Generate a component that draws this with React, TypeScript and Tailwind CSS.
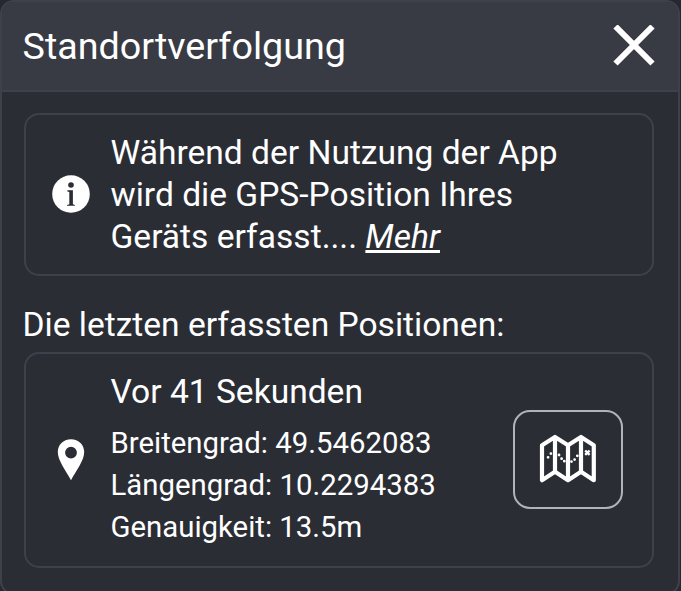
import type { ReactNode } from "react";

function Card({ className, children }: { className: string; children: ReactNode }) {
  return (
    <section className={`flex w-[630px] items-center rounded-[15px] border-2 border-[#3e404b] ${className}`}>
      {children}
    </section>
  );
}

function CloseIcon() {
  return (
    <svg width="42" height="42" viewBox="0 0 42 42" stroke="#fff" strokeWidth="6">
      <path d="M2.500 1.500 39.500 38.500M39.500 1.500 2.500 38.500" />
    </svg>
  );
}

function InfoIcon() {
  return (
    <svg width="38" height="38" viewBox="0 0 38 38">
      <circle cx="19" cy="19" r="18.8" fill="#fff" />
      <circle cx="19" cy="10" r="2.8" fill="#2b2d35" />
      <path d="M15.400 15.300h5.500v14l2 .6v.9h-7.900v-.9l2.300-.6V17l-1.900-.6z" fill="#2b2d35" />
    </svg>
  );
}

function PinIcon() {
  return (
    <svg width="28" height="42" viewBox="0 0 28 42">
      <path
        fill="#fff"
        fillRule="evenodd"
        d="M14 .2C6.200 .2.8 5.800.8 13c0 8.500 8 18.500 13.200 28.300C19.200 31.500 27.200 21.500 27.200 13 27.200 5.800 21.800.2 14 .2ZM14 7.700a5.900 5.900 0 1 0 0 11.800 5.900 5.900 0 0 0 0-11.800Z"
      />
    </svg>
  );
}

function MapIcon() {
  return (
    <svg width="58" height="50" viewBox="0 0 58 50" fill="none" stroke="#fff">
      <path
        strokeWidth="4.200"
        strokeLinejoin="round"
        d="M3 11.200 16 3l13 8.200L42 3l12.800 8.200v35L42 37.800l-13 8.400-13-8.400-13 8.400zM16 3v34.800M29 11.200v35M42 3v34.800"
      />
      <path
        strokeWidth="2.800"
        strokeLinecap="round"
        d="M9.100 23.300h.01M11.900 19.600h.01M20 21h.01M22.600 24.700h.01M25.300 27.200h.01M32.500 27.600h.01M35.600 25.600h.01M38.300 21.800h.01"
      />
      <path strokeWidth="2.400" d="m46.200 16.500 4.400 4.400M50.600 16.500l-4.400 4.400" />
    </svg>
  );
}

export default function App() {
  return (
    <div className="h-[591px] w-[681px] overflow-hidden bg-[#262830] font-['Roboto',sans-serif] text-white">
      <main className="h-[595px] w-[680px] overflow-hidden rounded-[14px] border-2 border-[#3e404b] bg-[#2b2d35]">
        <header className="flex h-[90px] items-center justify-between border-b-2 border-[#3e404b] bg-[#383b43] pr-[23px] pl-[20.5px]">
          <h1 className="pb-px text-[37.7px] leading-[44px] whitespace-nowrap">Standortverfolgung</h1>
          <button aria-label="Schließen">
            <CloseIcon />
          </button>
        </header>

        <div className="pt-[21px] pl-[22px]">
          <Card className="h-[163px]">
            <div className="flex w-[84.500px] shrink-0 pb-px pl-[25.5px]">
              <InfoIcon />
            </div>
            <p className="text-[33.55px] leading-[42px] whitespace-nowrap">
              Während der Nutzung der App
              <br />
              wird die GPS-Position Ihres
              <br />
              Geräts erfasst....{" "}
              <a className="italic underline decoration-[3px] underline-offset-[2px]">Mehr</a>
            </p>
          </Card>

          <h2 className="-ml-[1.5px] mt-[28px] mb-[6px] text-[33.55px] leading-[42px] whitespace-nowrap">
            Die letzten erfassten Positionen:
          </h2>

          <Card className="h-[216px] pb-0.5">
            <div className="flex w-[84.500px] shrink-0 pt-0.5 pl-[31px]">
              <PinIcon />
            </div>
            <div className="w-[402.500px] shrink-0 whitespace-nowrap">
              <h3 className="mb-[9px] text-[33.55px] leading-[42px]">Vor 41 Sekunden</h3>
              <p className="text-[29.35px] leading-[42px]">
                Breitengrad: 49.5462083
                <br />
                Längengrad: 10.2294383
                <br />
                Genauigkeit: 13.5m
              </p>
            </div>
            <button
              aria-label="Karte"
              className="flex h-[99px] w-[110px] shrink-0 items-center justify-center rounded-[17px] border-2 border-[#b0b3b9]"
            >
              <MapIcon />
            </button>
          </Card>
        </div>
      </main>
    </div>
  );
}
